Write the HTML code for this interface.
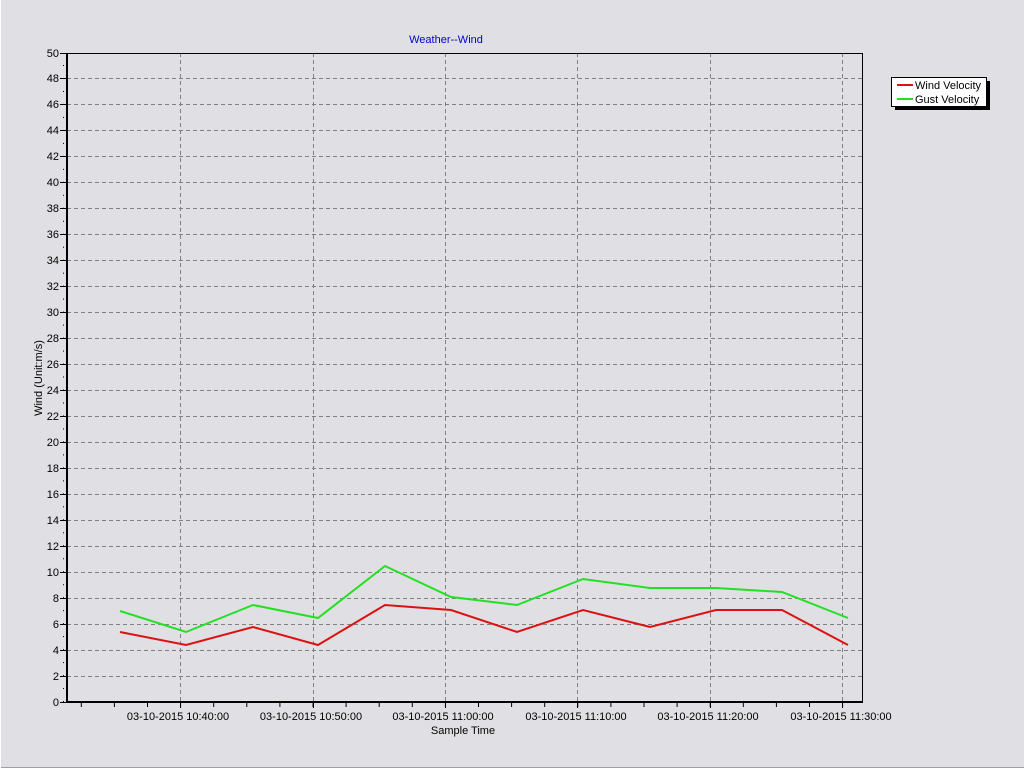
<!DOCTYPE html>
<html><head><meta charset="utf-8"><style>
html,body{margin:0;padding:0;background:#e0e0e4;}
svg{display:block;font-family:"Liberation Sans",sans-serif;font-size:11px;}
</style></head><body>
<svg width="1024" height="768" viewBox="0 0 1024 768">
<defs>
<pattern id="yt" x="0" y="0.1" width="6" height="12.98" patternUnits="userSpaceOnUse"><rect x="0" y="0" width="4" height="1" fill="#000"/></pattern>
<pattern id="xt" x="14.6" y="0" width="33.1" height="6" patternUnits="userSpaceOnUse"><rect x="0" y="0" width="1" height="5" fill="#000"/></pattern>
</defs>
<rect x="0" y="0" width="1024" height="768" fill="#e0e0e4"/>
<line x1="0" y1="767.5" x2="1024" y2="767.5" stroke="#a0a0a0"/>
<line x1="0.5" y1="0" x2="0.5" y2="768" stroke="#fff"/>
<text x="446" y="43" fill="#0000cc" text-anchor="middle">Weather--Wind</text>
<rect x="63" y="53" width="4" height="649" fill="url(#yt)"/>
<rect x="67" y="702" width="795" height="5" fill="url(#xt)"/>
<g stroke="#808080" stroke-dasharray="4,3" stroke-width="1">
<path d="M67 676.5H862M67 650.5H862M67 624.5H862M67 598.5H862M67 572.5H862M67 546.5H862M67 520.5H862M67 494.5H862M67 468.5H862M67 442.5H862M67 416.5H862M67 390.5H862M67 364.5H862M67 338.5H862M67 312.5H862M67 286.5H862M67 260.5H862M67 234.5H862M67 208.5H862M67 182.5H862M67 156.5H862M67 130.5H862M67 104.5H862M67 78.5H862"/>
<path d="M180.5 53V702M313.5 53V702M445.5 53V702M577.5 53V702M710.5 53V702M842.5 53V702"/>
</g>
<g stroke="#000" stroke-width="1">
<path d="M180.5 702V708M313.5 702V708M445.5 702V708M577.5 702V708M710.5 702V708M842.5 702V708"/>
<path d="M60 702.5H67M60 676.5H67M60 650.5H67M60 624.5H67M60 598.5H67M60 572.5H67M60 546.5H67M60 520.5H67M60 494.5H67M60 468.5H67M60 442.5H67M60 416.5H67M60 390.5H67M60 364.5H67M60 338.5H67M60 312.5H67M60 286.5H67M60 260.5H67M60 234.5H67M60 208.5H67M60 182.5H67M60 156.5H67M60 130.5H67M60 104.5H67M60 78.5H67M60 53.5H67"/>
</g>
<rect x="66" y="53" width="2" height="650" fill="#000"/>
<rect x="66" y="701" width="797" height="2" fill="#000"/>
<line x1="67" y1="53.5" x2="862" y2="53.5" stroke="#000"/>
<line x1="862.5" y1="53" x2="862.5" y2="702" stroke="#000"/>
<g fill="#000" text-anchor="end">
<text x="59" y="706">0</text><text x="59" y="680">2</text><text x="59" y="654">4</text><text x="59" y="628">6</text><text x="59" y="602">8</text><text x="59" y="576">10</text><text x="59" y="550">12</text><text x="59" y="524">14</text><text x="59" y="498">16</text><text x="59" y="472">18</text><text x="59" y="446">20</text><text x="59" y="420">22</text><text x="59" y="394">24</text><text x="59" y="368">26</text><text x="59" y="342">28</text><text x="59" y="316">30</text><text x="59" y="290">32</text><text x="59" y="264">34</text><text x="59" y="238">36</text><text x="59" y="212">38</text><text x="59" y="186">40</text><text x="59" y="160">42</text><text x="59" y="134">44</text><text x="59" y="108">46</text><text x="59" y="82">48</text><text x="59" y="57">50</text>
</g>
<g fill="#000" text-anchor="middle">
<text x="178" y="720">03-10-2015 10:40:00</text>
<text x="311" y="720">03-10-2015 10:50:00</text>
<text x="443" y="720">03-10-2015 11:00:00</text>
<text x="576" y="720">03-10-2015 11:10:00</text>
<text x="708" y="720">03-10-2015 11:20:00</text>
<text x="841" y="720">03-10-2015 11:30:00</text>
<text x="463" y="734">Sample Time</text>
</g>
<text transform="translate(42,378) rotate(-90)" text-anchor="middle" fill="#000">Wind (Unit:m/s)</text>
<polyline fill="none" stroke="#22e022" stroke-width="2" points="120,611 186,632 253,605 318,618 385,566 451,597 517,605 583,579 650,588 716,588 782,592 848,618"/>
<polyline fill="none" stroke="#dd1111" stroke-width="2" points="120,632 186,645 253,627 318,645 385,605 451,610 517,632 583,610 650,627 716,610 782,610 848,645"/>
<rect x="895" y="81" width="95" height="29" fill="#000"/>
<rect x="891.5" y="77.5" width="95" height="29" fill="#fff" stroke="#000"/>
<line x1="897" y1="85" x2="913" y2="85" stroke="#dd1111" stroke-width="2"/>
<line x1="897" y1="99" x2="913" y2="99" stroke="#22e022" stroke-width="2"/>
<text x="915" y="89" fill="#000">Wind Velocity</text>
<text x="915" y="103" fill="#000">Gust Velocity</text>
</svg>
</body></html>
